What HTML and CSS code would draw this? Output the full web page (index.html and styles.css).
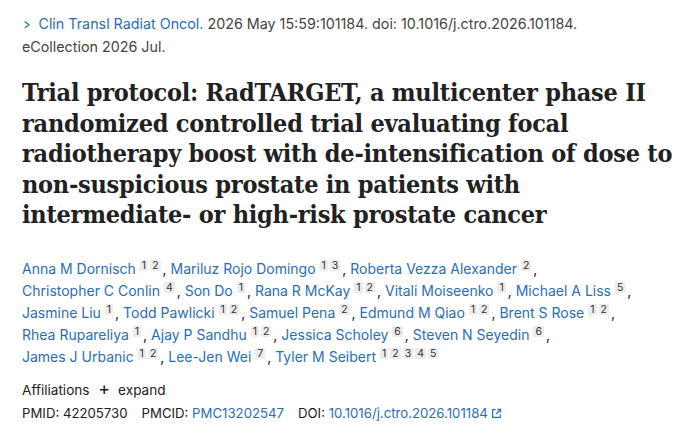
FILE: index.html
```html
<!DOCTYPE html>
<html>
<head>
<meta charset="utf-8">
<link rel="stylesheet" href="styles.css">
</head>
<body>
<main class="article">
  <div class="cit">
    <span class="chev">&gt;</span><a class="link" href="#">Clin Transl Radiat Oncol.</a> 2026 May 15:59:101184. doi: 10.1016/j.ctro.2026.101184.<br>eCollection 2026 Jul.
  </div>
  <h1 class="title">Trial protocol: RadTARGET, a multicenter phase II randomized controlled trial evaluating focal radiotherapy boost with de-intensification of dose to non-suspicious prostate in patients with intermediate- or high-risk prostate cancer</h1>
  <div class="authors">
    <span class="au"><a class="link" href="#">Anna M Dornisch</a> <sup class="n">1</sup><sup class="n">2</sup>,</span>
    <span class="au"><a class="link" href="#">Mariluz Rojo Domingo</a> <sup class="n">1</sup><sup class="n">3</sup>,</span>
    <span class="au"><a class="link" href="#">Roberta Vezza Alexander</a> <sup class="n">2</sup>,</span>
    <span class="au"><a class="link" href="#">Christopher C Conlin</a> <sup class="n">4</sup>,</span>
    <span class="au"><a class="link" href="#">Son Do</a> <sup class="n">1</sup>,</span>
    <span class="au"><a class="link" href="#">Rana R McKay</a> <sup class="n">1</sup><sup class="n">2</sup>,</span>
    <span class="au"><a class="link" href="#">Vitali Moiseenko</a> <sup class="n">1</sup>,</span>
    <span class="au"><a class="link" href="#">Michael A Liss</a> <sup class="n">5</sup>,</span>
    <span class="au"><a class="link" href="#">Jasmine Liu</a> <sup class="n">1</sup>,</span>
    <span class="au"><a class="link" href="#">Todd Pawlicki</a> <sup class="n">1</sup><sup class="n">2</sup>,</span>
    <span class="au"><a class="link" href="#">Samuel Pena</a> <sup class="n">2</sup>,</span>
    <span class="au"><a class="link" href="#">Edmund M Qiao</a> <sup class="n">1</sup><sup class="n">2</sup>,</span>
    <span class="au"><a class="link" href="#">Brent S Rose</a> <sup class="n">1</sup><sup class="n">2</sup>,</span>
    <span class="au"><a class="link" href="#">Rhea Rupareliya</a> <sup class="n">1</sup>,</span>
    <span class="au"><a class="link" href="#">Ajay P Sandhu</a> <sup class="n">1</sup><sup class="n">2</sup>,</span>
    <span class="au"><a class="link" href="#">Jessica Scholey</a> <sup class="n">6</sup>,</span>
    <span class="au"><a class="link" href="#">Steven N Seyedin</a> <sup class="n">6</sup>,</span>
    <span class="au"><a class="link" href="#">James J Urbanic</a> <sup class="n">1</sup><sup class="n">2</sup>,</span>
    <span class="au"><a class="link" href="#">Lee-Jen Wei</a> <sup class="n">7</sup>,</span>
    <span class="au"><a class="link" href="#">Tyler M Seibert</a> <sup class="n">1</sup><sup class="n">2</sup><sup class="n">3</sup><sup class="n">4</sup><sup class="n">5</sup></span>
  </div>
  <div class="affil">Affiliations <span class="plus">+</span> expand</div>
  <div class="ids">
    <span class="id">PMID: 42205730</span>
    <span class="id">PMCID: <a class="link" href="#">PMC13202547</a></span>
    <span class="id">DOI: <a class="link" href="#">10.1016/j.ctro.2026.101184</a><svg class="ext" width="11" height="11" viewBox="0 0 12 12"><path d="M5 1.8H1.8v8.4h8.4V7" fill="none" stroke="#2a6eb5" stroke-width="1.3"/><path d="M7 1.5h3.5V5M10.4 1.6L5.5 6.5" fill="none" stroke="#2a6eb5" stroke-width="1.3"/></svg></span>
  </div>
</main>
</body>
</html>
```
FILE: styles.css
```css
html, body { margin: 0; padding: 0; background: #fff; }
body { font-family: Inter, "Liberation Sans", Arial, sans-serif; color: #212121; }
.article { padding: 12px 4px 0 22px; }
.link { color: #2a6eb5; text-decoration: none; }
.cit { font-size: 14.3px; line-height: 23px; color: #444; }
.chev { color: #2a6eb5; margin-right: 7px; display: inline-block; transform: scaleX(0.75); }
.title {
  font-family: "DejaVu Serif", "Liberation Serif", serif;
  font-weight: bold;
  font-stretch: condensed;
  font-size: 25px;
  line-height: 30.5px;
  letter-spacing: -0.25px;
  color: #212121;
  margin: 20px 0 27px 0;
}
.authors { font-size: 14px; line-height: 22px; }
.au { white-space: nowrap; color: #212121; }
.n {
  display: inline-block;
  font-size: 10.5px;
  line-height: 11px;
  vertical-align: 5px;
  background: #ececec;
  color: #333;
  padding: 0 2px;
  margin-right: 2px;
  border-radius: 1px;
}
.affil { font-size: 13.6px; margin-top: 10px; line-height: 22px; color: #212121; }
.plus { font-size: 18px; margin: 0 4px 0 5px; }
.ids { font-size: 13.2px; line-height: 22px; margin-top: 1px; display: flex; gap: 14px; }
.ext { margin-left: 3px; vertical-align: -1px; }
```
